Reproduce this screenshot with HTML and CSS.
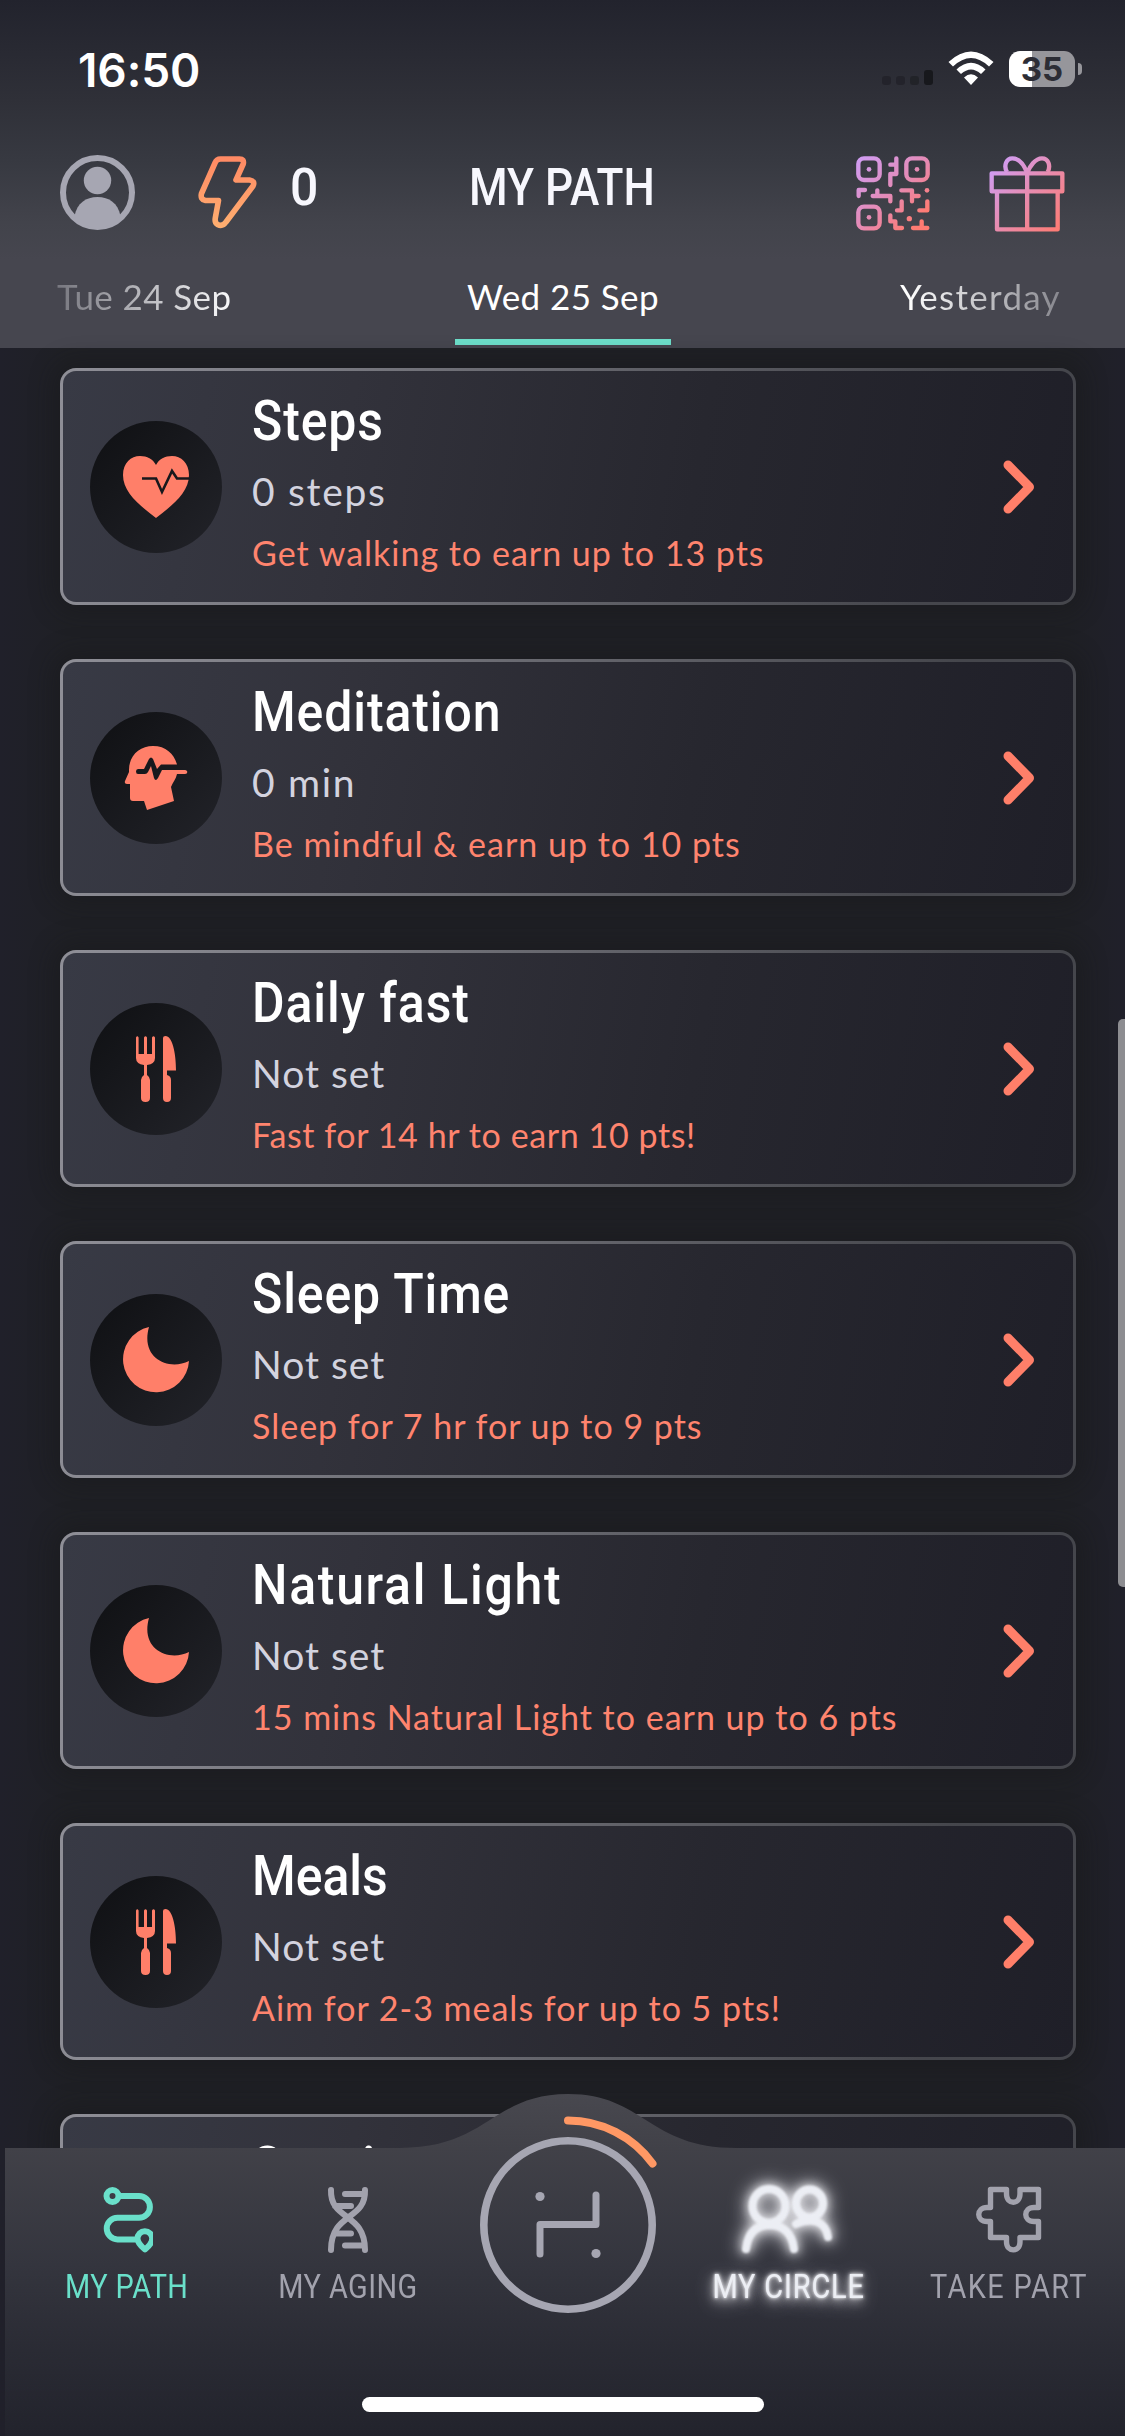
FILE: index.html
```html
<!DOCTYPE html>
<html lang="en">
<head>
<meta charset="utf-8">
<title>My Path</title>
<link rel="stylesheet" href="styles.css">
</head>
<body>
<svg class="defs" width="0" height="0" aria-hidden="true">
  <defs>
    <linearGradient id="pinkQr" gradientUnits="userSpaceOnUse" x1="50" y1="45" x2="270" y2="268"><stop offset="0" stop-color="#cf9df6"/><stop offset="0.5" stop-color="#e58ab4"/><stop offset="0.85" stop-color="#ff7b72"/></linearGradient>
    <linearGradient id="pinkGift" gradientUnits="userSpaceOnUse" x1="455" y1="75" x2="660" y2="268"><stop offset="0" stop-color="#cf9df6"/><stop offset="0.5" stop-color="#e88bad"/><stop offset="1" stop-color="#ff7b72"/></linearGradient>
    <linearGradient id="boltFill" x1="0" y1="0" x2="0" y2="1"><stop offset="0" stop-color="#ff8a64"/><stop offset="1" stop-color="#ffae70"/></linearGradient>
    <linearGradient id="navFill" x1="0" y1="0" x2="0" y2="1"><stop offset="0" stop-color="#48484f"/><stop offset="0.16" stop-color="#414148"/><stop offset="0.5" stop-color="#34353e"/><stop offset="0.75" stop-color="#2a2b34"/><stop offset="1" stop-color="#22232c"/></linearGradient>
    <symbol id="chevron" viewBox="0 0 32 54"><path d="M5 5 26.500 27 5 49" fill="none" stroke="#ff7f69" stroke-width="9" stroke-linecap="round" stroke-linejoin="round"/></symbol>
    <symbol id="heart" viewBox="0 0 66 62"><path d="M33 62C16 49 0 36 0 19 0 7 8 0 17 0 24 0 30 3 33 9 36 3 42 0 49 0 58 0 66 7 66 19 66 36 50 49 33 62Z" fill="#ff7f69"/><path d="M19 22.500H33L39 36 49 15 54 22.500H66" fill="none" stroke="#17181c" stroke-width="2.600"/></symbol>
    <symbol id="mind" viewBox="0 0 64 66"><path d="M5 25C5 10 16 1 29 1 42 1 50 9 53 19.500H37L33 24 29 14Q27 11 25 14L20 24H14Q12 24 12 26.500T14 29H21Q23 29 24 27L27 21 30 33Q31.500 37 34 33L38 25H61C64 25 64 29 61 29H53C52 34 49 37 47 42L50 56 23 65 20 56H9Q6 56 6 53V39H3Q0 39 1 36L5 27Z" fill="#ff7f69"/></symbol>
    <symbol id="food" viewBox="0 0 40 66"><path d="M0 1.500Q1.300-1 2.600 1.500V18H8V1.500Q9.500-1 11 1.500V18H16V1.500Q17.500-1 19 1.500V22Q19 28 11 29V39Q14 41 14 44V62Q14 66 9.500 66 5 66 5 62V44Q5 41 8 39V29Q0 28 0 22Z" fill="#ff7f69"/><path d="M27 2Q27 0 29.500 0C36 0 40 16 40 34.500H31V39Q35 40 35 44V62Q35 66 31 66 27 66 27 62Z" fill="#ff7f69"/></symbol>
    <symbol id="moon" viewBox="0 0 66 66"><path d="M26 0A33 33 0 1 0 66 34C46 44 17 32 26 0Z" fill="#ff7f69"/></symbol>
  </defs>
</svg>
<div class="screen">
  <header class="header">
    <div class="status">
      <span class="clock">16:50</span>
      <div class="status-right">
        <svg width="52" height="16" viewBox="0 0 52 16"><g fill="#1f2026"><rect x="0" y="6" width="9" height="9" rx="3" opacity=".7"/><rect x="14" y="6" width="9" height="9" rx="3" opacity=".7"/><rect x="28" y="6" width="9" height="9" rx="3" opacity=".8"/><rect x="42" y="0" width="9" height="15" rx="3" fill="#17181c"/></g></svg>
        <svg class="wifi" width="46" height="34" viewBox="0 0 46 34"><path d="M0.500 11Q23-10 45.500 11L41 15.500Q23-1.500 5 15.500ZM8.500 18.500Q23 5 37.500 18.500L33 23Q23 14 13 23ZM16 26.500Q23 20 30 26.500L23 34Z" fill="#fff"/></svg>
        <div class="battery"><span>35</span></div>
        <i class="nub"></i>
      </div>
    </div>
    <div class="toolbar">
      <svg class="avatar" width="75" height="75" viewBox="0 0 75 75"><circle cx="37.500" cy="37.500" r="34.500" fill="none" stroke="#a6a6b2" stroke-width="6"/><circle cx="37.500" cy="25.500" r="13.700" fill="#a6a6b2"/><path d="M14.500 61C17 48 26 42 37.500 42S58 48 60.500 61L56 68 37.500 74 19 68Z" fill="#a6a6b2"/></svg>
      <svg class="bolt" width="60" height="74" viewBox="197 155 60 74"><path d="M220.500 159H239.500Q244.500 159 243.200 164L236 180H249.500Q255.500 181 253 186L226 222Q222.500 227 217.500 224.500 214.500 222.500 215.300 218L218.500 200.500H205.500Q200 199.500 201.500 193.500L215 163Q216.500 159 220.500 159Z" fill="none" stroke="url(#boltFill)" stroke-width="5.600" stroke-linejoin="round"/></svg>
      <span class="points">0</span>
      <h1 class="heading">MY PATH</h1>
      <svg class="qr" width="76" height="76" viewBox="45 41 228 228"><g fill="none" stroke="url(#pinkQr)" stroke-width="13" stroke-linecap="round" stroke-linejoin="round"><rect x="55" y="51" width="64" height="65" rx="17"/><rect x="199" y="51" width="64" height="65" rx="17"/><rect x="55" y="196" width="64" height="65" rx="17"/><path d="M169 51V98M169 70H151M169 98H151V131M56 164V146H75M98 164H151V180M112 164V147M184 147H216V180M216 164H236M185 180V207H171M262 180V207H238M151 222V240H166V260H186M219 260H262M245 260V240"/></g><g fill="url(#pinkQr)"><circle cx="87" cy="84" r="7"/><circle cx="231" cy="84" r="7"/><circle cx="87" cy="228" r="7"/><circle cx="261" cy="147" r="7"/><circle cx="208" cy="232" r="8"/></g></svg>
      <svg class="gift" width="76" height="77" viewBox="448 41 228 231"><g fill="none" stroke="url(#pinkGift)" stroke-width="13" stroke-linejoin="round"><rect x="456" y="96" width="212" height="54"/><path d="M472 150V264H654V150M562.500 96V264M562 94C555 76 540 51 518 51 500 51 491 73 502 92M563 94C570 76 586 51 607 51 626 51 634 73 624 92"/></g></svg>
    </div>
    <nav class="dates">
      <span class="date prev">Tue 24 Sep</span>
      <span class="date current">Wed 25 Sep</span>
      <span class="date next">Yesterday</span>
    </nav>
  </header>

  <main class="list">
    <article class="card"><div class="badge"><svg width="66" height="62"><use href="#heart"/></svg></div><div class="copy"><h2>Steps</h2><p class="value wide">0 steps</p><p class="hint">Get walking to earn up to 13 pts</p></div><svg class="chevron" width="32" height="54"><use href="#chevron"/></svg></article>
    <article class="card"><div class="badge"><svg width="64" height="66"><use href="#mind"/></svg></div><div class="copy"><h2>Meditation</h2><p class="value wide">0 min</p><p class="hint">Be mindful &amp; earn up to 10 pts</p></div><svg class="chevron" width="32" height="54"><use href="#chevron"/></svg></article>
    <article class="card"><div class="badge"><svg width="40" height="66"><use href="#food"/></svg></div><div class="copy"><h2>Daily fast</h2><p class="value">Not set</p><p class="hint snug">Fast for 14 hr to earn 10 pts!</p></div><svg class="chevron" width="32" height="54"><use href="#chevron"/></svg></article>
    <article class="card"><div class="badge"><svg width="66" height="66"><use href="#moon"/></svg></div><div class="copy"><h2>Sleep Time</h2><p class="value">Not set</p><p class="hint">Sleep for 7 hr for up to 9 pts</p></div><svg class="chevron" width="32" height="54"><use href="#chevron"/></svg></article>
    <article class="card"><div class="badge"><svg width="66" height="66"><use href="#moon"/></svg></div><div class="copy"><h2 class="loose">Natural Light</h2><p class="value">Not set</p><p class="hint">15 mins Natural Light to earn up to 6 pts</p></div><svg class="chevron" width="32" height="54"><use href="#chevron"/></svg></article>
    <article class="card"><div class="badge"><svg width="40" height="66"><use href="#food"/></svg></div><div class="copy"><h2 class="tight">Meals</h2><p class="value">Not set</p><p class="hint">Aim for 2-3 meals for up to 5 pts!</p></div><svg class="chevron" width="32" height="54"><use href="#chevron"/></svg></article>
    <article class="card"><div class="badge"></div><div class="copy"><h2 class="loose">Sunrise</h2></div></article>
  </main>
  <div class="scrollbar"></div>

  <footer class="tabbar">
    <svg class="tabbar-shape" width="1120" height="342" viewBox="5 2094 1120 342"><path d="M5 2148H400C488 2148 492 2094 568 2094S648 2148 736 2148H1125V2436H5Z" fill="url(#navFill)"/></svg>
    <div class="tabs">
      <a class="tab active"><svg width="52" height="68" viewBox="101.500 2186 52 68"><g fill="none" stroke="currentColor" stroke-width="6" stroke-linecap="round" stroke-linejoin="round"><circle cx="113" cy="2196" r="6"/><path d="M120 2196H139.500A10.900 10.900 0 0 1 139.500 2217.800H118A10.800 10.800 0 0 0 118 2239.400H137M145.500 2249.500C140 2245 138 2242 138 2238.500A7.300 7.300 0 0 1 152.700 2238.500C152.700 2242 151 2245 145.500 2249.500Z"/></g></svg><span>MY PATH</span></a>
      <a class="tab"><svg width="42" height="68" viewBox="327 2186 42 68"><path d="M331 2190C330 2221 365 2212 365 2250M365 2190C366 2221 331 2212 331 2250M345 2194H364M335 2206H351M335 2233.500H351M345 2245.500H363" fill="none" stroke="currentColor" stroke-width="6" stroke-linecap="round"/></svg><span>MY AGING</span></a>
      <a class="tab main-tab"><svg width="196" height="206" viewBox="470 2114 196 206"><g fill="none" stroke="#a6a6b2" stroke-linecap="round" stroke-linejoin="round"><circle cx="568" cy="2225" r="84.200" stroke-width="7.600"/><path d="M540 2254V2224.500H596V2195" stroke-width="7"/></g><circle cx="540" cy="2196.500" r="4.600" fill="#a6a6b2"/><circle cx="596" cy="2253.500" r="4.600" fill="#a6a6b2"/><path d="M568 2120.500A104.500 104.500 0 0 1 652.500 2163.500" fill="none" stroke="#ff9864" stroke-width="8" stroke-linecap="round"/></svg></a>
      <a class="tab glow"><svg width="94" height="68" viewBox="742 2186 94 68"><g fill="none" stroke="currentColor" stroke-width="8" stroke-linecap="round"><ellipse cx="769" cy="2206" rx="16.500" ry="17"/><ellipse cx="809.500" cy="2203.500" rx="13.500" ry="14"/><path d="M746 2249C748 2233 756 2225 769.500 2225S792 2233 794 2249M796 2224C812 2216 826 2222 828 2237"/></g></svg><span>MY CIRCLE</span></a>
      <a class="tab take"><svg width="68" height="68" viewBox="975 2186 68 68"><path d="M990.500 2189.500H1006.500V2194C1006.500 2205 1020 2205 1020 2194V2189.500H1038.500V2207.500H1034C1023 2207.500 1023 2221.500 1034 2221.500H1038.500V2237.500H1020V2242C1020 2252.500 1006.500 2252.500 1006.500 2242V2237.500H990.500V2221.500H987C976 2221.500 976 2207.500 987 2207.500H990.500Z" fill="none" stroke="currentColor" stroke-width="5.400" stroke-linejoin="round"/></svg><span>TAKE PART</span></a>
    </div>
    <div class="home-indicator"></div>
  </footer>
</div>
</body>
</html>
```
FILE: styles.css
```css
* { box-sizing: border-box; margin: 0; padding: 0; }
body { background: #1e1f26; }
.defs { position: absolute; }
.screen {
  position: relative;
  width: 1125px;
  height: 2436px;
  overflow: hidden;
  display: flex;
  flex-direction: column;
  background: linear-gradient(90deg, #20202a 0, #1f2025 6%, #1f2025 95%, #20202a 100%);
  font-family: Lato, "Noto Sans", sans-serif;
  color: #fff;
}
.header {
  flex: none;
  height: 348px;
  display: flex;
  flex-direction: column;
  background: linear-gradient(180deg, #22232d 0, #2f3038 100px, #373941 160px, #42434b 222px, #46464f 260px, #46464f 100%);
}

/* status bar */
.status {
  height: 138px;
  display: flex;
  justify-content: space-between;
  padding: 42px 43px 0 78px;
}
.clock { font: 600 46px/56px Inter, sans-serif; letter-spacing: -0.1px; }
.status-right { display: flex; align-items: flex-end; height: 45px; }
.wifi { margin: 0 15px 2px 14px; }
.status-right svg:first-child { margin-bottom: 1px; }
.battery {
  width: 66px;
  height: 36px;
  border-radius: 11px;
  background: linear-gradient(90deg, #fff 35%, #96969b 35%);
  text-align: center;
  font: 700 33px/36px Inter, sans-serif;
  color: #2c2d35;
}
.nub { width: 4px; height: 12px; margin: 0 0 12px 3px; border-radius: 0 5px 5px 0; background: #96969b; }

/* toolbar */
.toolbar { height: 110px; display: flex; align-items: flex-start; padding: 17px 57px 0 60px; }
.bolt { margin-left: 62px; }
.points, .heading {
  font: 500 52px/60px Roboto, sans-serif;
  color: #f7f7fd;
  transform: scaleX(.85);
  transform-origin: 0 0;
  white-space: nowrap;
}
.points { width: 30px; margin: 3px 0 0 33px; transform: scaleX(.96); }
.heading { width: 214px; margin: 3px 0 0 149px; }
.qr { margin-left: 172px; }
.gift { margin-left: 58px; }

/* dates */
.dates { flex: 1; display: grid; grid-template-columns: 455px 216px 1fr; }
.date { font-size: 35px; line-height: 44px; padding-top: 26px; letter-spacing: .4px; }
.prev { padding-left: 57px; }
.prev, .next { -webkit-background-clip: text; background-clip: text; color: transparent; }
.prev { background-image: linear-gradient(90deg, #77777f 57px, #f6f6f8 225px); }
.next { padding-left: 229px; letter-spacing: 1.3px; background-image: linear-gradient(90deg, #fff 235px, #88888f 388px); }
.current { height: 97px; text-align: center; border-bottom: 6px solid #6ddfca; }

/* cards */
.list { flex: none; display: flex; flex-direction: column; gap: 54px; padding: 20px 49px 0 60px; }
.card {
  height: 237px;
  display: flex;
  align-items: center;
  padding: 0 38px 0 27px;
  border: 3px solid transparent;
  border-radius: 16px;
  background:
    linear-gradient(100deg, #383a45 0, #32323b 28%, #27272f 62%, #1f1f28 100%) padding-box,
    linear-gradient(100deg, #8f8f97 0, #45464c 85%) border-box;
  box-shadow: 0 0 24px 6px rgba(22, 23, 26, .4);
}
.badge {
  width: 132px;
  height: 132px;
  border-radius: 50%;
  display: flex;
  align-items: center;
  justify-content: center;
  background: linear-gradient(135deg, #0f1013, #222329);
}
.copy { flex: 1; align-self: stretch; padding: 19px 0 0 30px; white-space: nowrap; }
.copy h2 {
  font: 500 55.5px/64px Roboto, sans-serif;
  letter-spacing: 1px;
  transform: scaleX(.9);
  transform-origin: 0 0;
}
.copy h2.loose { letter-spacing: 1.9px; }
.copy h2.tight { letter-spacing: 0; }
.value { margin-top: 15px; font-size: 39px; line-height: 44px; letter-spacing: 1px; color: #d3d3df; }
.value.wide { letter-spacing: 1.7px; }
.hint { margin-top: 18px; font-size: 34px; line-height: 44px; letter-spacing: 1px; color: #ff846e; }
.hint.snug { letter-spacing: .6px; }

.scrollbar { position: absolute; right: 0; top: 1019px; width: 7px; height: 568px; border-radius: 5px 0 0 5px; background: #8d8d91; }

/* tab bar */
.tabbar { position: absolute; left: 0; bottom: 0; width: 1125px; height: 342px; }
.tabbar-shape { position: absolute; left: 5px; top: 0; }
.tabs { position: relative; height: 303px; display: grid; grid-template-columns: 254px 187px 254px 187px 1fr; }
.tab { display: flex; flex-direction: column; align-items: center; padding-top: 92px; color: #a2a2ad; }
.tab span {
  margin-top: 12px;
  font: 400 34px/40px Roboto, sans-serif;
  letter-spacing: .5px;
  transform: scaleX(.85);
  white-space: nowrap;
}
.tab.active { color: #6ae0ca; }
.tab.main-tab { padding-top: 20px; }
.tab.take { padding-left: 10px; }
.tab.take span { letter-spacing: 1.6px; }
.tab.glow { color: #eceef4; }
.glow svg { overflow: visible; filter: blur(1px) drop-shadow(0 0 5px #e8e8ec) drop-shadow(0 0 9px rgba(230, 230, 235, .9)); }
.glow span { letter-spacing: 1px; text-shadow: 0 0 3px #e8e8ec, 0 0 6px #d8d8dd, 0 3px 10px #c8c8cd, 0 4px 20px #c8c8cd; }
.home-indicator { position: relative; width: 402px; height: 15px; margin-left: 362px; border-radius: 8px; background: #fff; }
```
